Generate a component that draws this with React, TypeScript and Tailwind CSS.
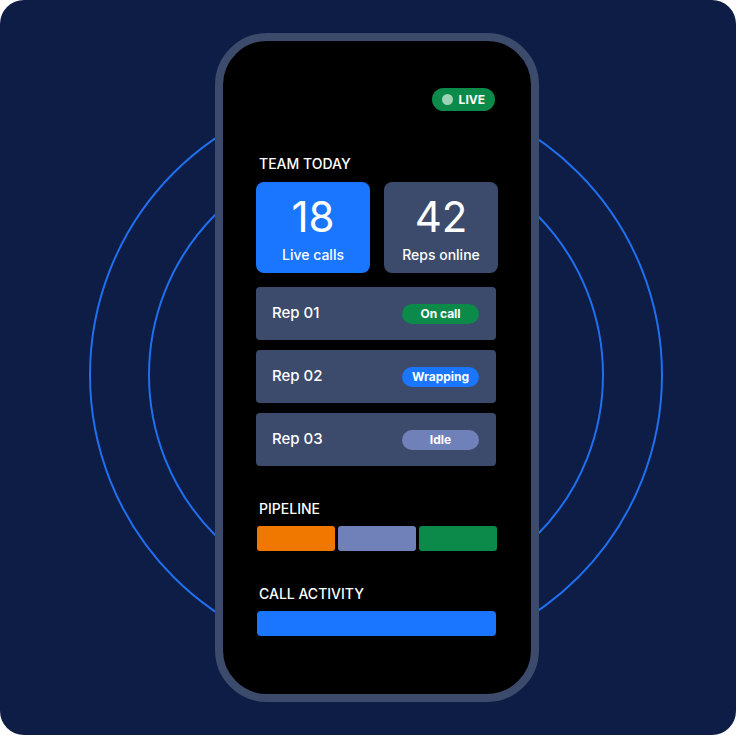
export default function App() {
  const reps = [
    { name: 'Rep 01', status: 'On call', color: 'bg-[#0b8a4a]' },
    { name: 'Rep 02', status: 'Wrapping', color: 'bg-[#1a76ff]' },
    { name: 'Rep 03', status: 'Idle', color: 'bg-[#7080b8]' },
  ];

  return (
    <div className="w-[736px] h-[735px] bg-white" style={{ fontFamily: 'Inter, "Noto Sans", sans-serif' }}>
      <div className="relative w-[736px] h-[735px] rounded-[24px] bg-[#0d1d45] overflow-hidden pl-[215px] pt-[33px]">
        {/* concentric rings behind the phone */}
        <div className="absolute left-[89px] top-[88px] w-[574px] h-[574px] rounded-full border-2 border-[#1f6fef]"></div>
        <div className="absolute left-[148px] top-[147px] w-[456px] h-[456px] rounded-full border-2 border-[#1f6fef]"></div>

        {/* phone */}
        <div className="relative w-[324px] h-[669px] rounded-[52px] border-[8px] border-[#3c4a6b] bg-black px-[33px] pt-[47px] text-white">
          <div className="flex justify-end pr-[3px]">
            <div className="flex items-center gap-[6px] h-[23px] px-[10px] rounded-full bg-[#0b8a4a]">
              <span className="w-[11px] h-[11px] rounded-full bg-[#9fd3b5]"></span>
              <span className="text-[12px] font-bold leading-none">LIVE</span>
            </div>
          </div>

          <div className="mt-[43px] text-[14px] font-medium leading-[20px] pl-[3px]">TEAM TODAY</div>

          <div className="mt-[8px] grid grid-cols-2 gap-[14px]">
            <div className="h-[91px] rounded-[8px] bg-[#1a76ff] flex flex-col items-center pt-[10px]">
              <span className="text-[42px] leading-[50px] font-normal">18</span>
              <span className="text-[14px] leading-[20px] font-medium mt-[3px]">Live calls</span>
            </div>
            <div className="h-[91px] rounded-[8px] bg-[#3c4a6b] flex flex-col items-center pt-[10px]">
              <span className="text-[42px] leading-[50px] font-normal">42</span>
              <span className="text-[14px] leading-[20px] font-medium mt-[3px]">Reps online</span>
            </div>
          </div>

          <div className="mt-[14px] flex flex-col gap-[10px] pr-[2px]">
            {reps.map((r) => (
              <div key={r.name} className="h-[53px] rounded-[4px] bg-[#3c4a6b] flex items-center justify-between pl-[16px] pr-[17px]">
                <span className="text-[15px] font-medium">{r.name}</span>
                <span className={`w-[77px] h-[20px] rounded-full ${r.color} flex items-center justify-center text-[12px] font-bold`}>
                  {r.status}
                </span>
              </div>
            ))}
          </div>

          <div className="mt-[33px] text-[14px] font-medium leading-[20px] pl-[3px]">PIPELINE</div>
          <div className="mt-[7px] flex gap-[3px] pl-[1px] pr-[1px]">
            <div className="flex-1 h-[25px] rounded-[3px] bg-[#f07800]"></div>
            <div className="flex-1 h-[25px] rounded-[3px] bg-[#7080b8]"></div>
            <div className="flex-1 h-[25px] rounded-[3px] bg-[#0b8a4a]"></div>
          </div>

          <div className="mt-[33px] text-[14px] font-medium leading-[20px] pl-[3px]">CALL ACTIVITY</div>
          <div className="mt-[7px] mx-[1px] mr-[2px] h-[25px] rounded-[4px] bg-[#1a76ff]"></div>
        </div>
      </div>
    </div>
  );
}
